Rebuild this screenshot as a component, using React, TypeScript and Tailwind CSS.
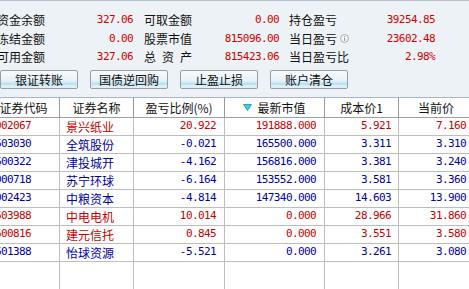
import React from "react";

const CJK = "font-['Noto_Sans_CJK_SC',sans-serif]";
const NUM = "font-['DejaVu_Sans_Mono',monospace] text-[11px] tracking-[-0.6px]";

type Row = {
  code: string;
  name: string;
  ratio: string;
  value: string;
  cost: string;
  price: string;
  up: boolean;
};

const rows: Row[] = [
  { code: "002067", name: "景兴纸业", ratio: "20.922", value: "191888.000", cost: "5.921", price: "7.160", up: true },
  { code: "603030", name: "全筑股份", ratio: "-0.021", value: "165500.000", cost: "3.311", price: "3.310", up: false },
  { code: "600322", name: "津投城开", ratio: "-4.162", value: "156816.000", cost: "3.381", price: "3.240", up: false },
  { code: "000718", name: "苏宁环球", ratio: "-6.164", value: "153552.000", cost: "3.581", price: "3.360", up: false },
  { code: "002423", name: "中粮资本", ratio: "-4.814", value: "147340.000", cost: "14.603", price: "13.900", up: false },
  { code: "603988", name: "中电电机", ratio: "10.014", value: "0.000", cost: "28.966", price: "31.860", up: true },
  { code: "600816", name: "建元信托", ratio: "0.845", value: "0.000", cost: "3.551", price: "3.580", up: true },
  { code: "601388", name: "怡球资源", ratio: "-5.521", value: "0.000", cost: "3.261", price: "3.080", up: false },
];

function InfoIcon() {
  return (
    <svg width="13" height="13" viewBox="0 0 13 13" className="ml-[3px]">
      <circle cx="6.5" cy="6.5" r="5.7" fill="#f4f6f8" stroke="#8a8a8a" strokeWidth="1" />
      <rect x="6" y="3" width="1.4" height="1.4" fill="#8a8a8a" />
      <rect x="6" y="5.4" width="1.4" height="4.6" fill="#8a8a8a" />
    </svg>
  );
}

function InfoRow({
  la,
  va,
  lb,
  vb,
  lc,
  vc,
}: {
  la: string;
  va: string;
  lb: React.ReactNode;
  vb: string;
  lc: React.ReactNode;
  vc: string;
}) {
  return (
    <div className="flex h-[18.5px] items-center whitespace-nowrap">
      <div className={`w-[48px] ${CJK} text-[12px] text-[#111]`}>{la}</div>
      <div className={`w-[88px] text-right text-[#d40000] ${NUM}`}>{va}</div>
      <div className="w-[11px]" />
      <div className={`w-[48px] ${CJK} text-[12px] text-[#111]`}>{lb}</div>
      <div className={`w-[87px] text-right text-[#d40000] ${NUM}`}>{vb}</div>
      <div className="w-[10px]" />
      <div className={`w-[60px] flex items-center ${CJK} text-[12px] text-[#111]`}>{lc}</div>
      <div className={`w-[86px] text-right text-[#d40000] ${NUM}`}>{vc}</div>
    </div>
  );
}

function Btn({ label }: { label: string }) {
  return (
    <button className="w-[78px] h-[19px] rounded-[2px] border border-[#9a9ea4] bg-[linear-gradient(to_bottom,#f7fafc_0%,#e9f2f8_55%,#c4e9f6_72%,#9fdcf0_76%,#dcedf5_84%,#e6eff4_100%)] flex items-center justify-center">
      <span className={`${CJK} text-[12px] leading-none text-[#111]`}>{label}</span>
    </button>
  );
}

const COLS = "grid grid-cols-[72px_74px_91px_100px_74px_75px]";

export default function App() {
  return (
    <div className="w-[469px] h-[289px] overflow-hidden bg-white relative">
      {/* account summary */}
      <div className="h-[97px] bg-[#edf2f6] border-t border-[#b4c0cc]">
        <div className="-ml-[3px] pt-[10px]">
          <InfoRow la="资金余额" va="327.06" lb="可取金额" vb="0.00" lc="持仓盈亏" vc="39254.85" />
          <InfoRow la="冻结金额" va="0.00" lb="股票市值" vb="815096.00" lc={<>当日盈亏<InfoIcon /></>} vc="23602.48" />
          <InfoRow
            la="可用金额"
            va="327.06"
            lb={
              <span className="flex justify-between w-[48px]">
                <span>总</span>
                <span>资</span>
                <span>产</span>
              </span>
            }
            vb="815423.06"
            lc="当日盈亏比"
            vc="2.98%"
          />
        </div>
        <div className="flex gap-[12px] mt-[3.5px]">
          <Btn label="银证转账" />
          <Btn label="国债逆回购" />
          <Btn label="止盈止损" />
          <Btn label="账户清仓" />
        </div>
      </div>

      {/* holdings table */}
      <div className="-ml-[12px] w-[486px]">
        <div className={`${COLS} h-[21px] border-t border-b border-t-[#a8b4c4] border-b-[#a0a0a0] bg-white`}>
          {["证券代码", "证券名称", "盈亏比例(%)", "", "成本价1", "当前价"].map((h, i) => (
            <div
              key={i}
              className={`flex items-center justify-center border-r border-[#9a9a9a] ${CJK} text-[12px] text-[#111] whitespace-nowrap`}
            >
              {i === 3 ? (
                <>
                  <svg width="9" height="7" viewBox="0 0 9 7" className="mr-[5px]">
                    <polygon points="0.5,0.5 8.5,0.5 4.5,6.5" fill="#33d3e6" stroke="#1a90a6" strokeWidth="0.8" />
                  </svg>
                  最新市值
                </>
              ) : (
                h
              )}
            </div>
          ))}
        </div>
        {rows.map((r) => {
          const c = r.up ? "text-[#c80000]" : "text-[#0000a8]";
          const cell = "h-[18px] border-r border-b border-[#bdbdbd] flex items-center";
          return (
            <div key={r.code} className={COLS}>
              <div className={`${cell} pl-[7px] ${NUM} ${c}`}>{r.code}</div>
              <div className={`${cell} pl-[6px] ${CJK} text-[12px] ${c}`}>{r.name}</div>
              <div className={`${cell} justify-end pr-[8px] ${NUM} ${c}`}>{r.ratio}</div>
              <div className={`${cell} justify-end pr-[8px] ${NUM} ${c}`}>{r.value}</div>
              <div className={`${cell} justify-end pr-[7px] ${NUM} ${c}`}>{r.cost}</div>
              <div className={`${cell} justify-end pr-[7px] ${NUM} ${c}`}>{r.price}</div>
            </div>
          );
        })}
        <div className={COLS}>
          {[0, 1, 2, 3, 4, 5].map((i) => (
            <div key={i} className="h-[40px] border-r border-[#bdbdbd]" />
          ))}
        </div>
      </div>
    </div>
  );
}
